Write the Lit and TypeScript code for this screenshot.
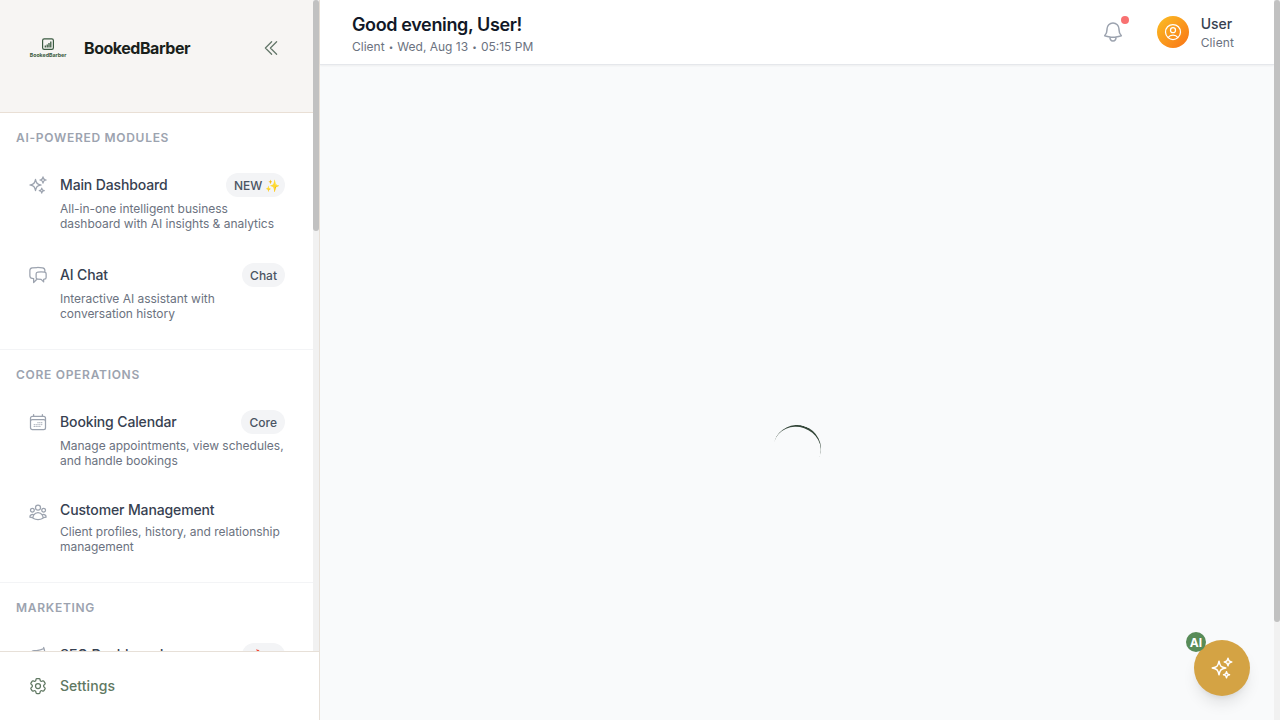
import { LitElement, html, css, svg } from "lit";
import { customElement } from "lit/decorators.js";

const ICONS: Record<string, string[]> = {
  sparkles: [
    "M9.813 15.904 9 18.75l-.813-2.846a4.5 4.5 0 0 0-3.09-3.09L2.25 12l2.846-.813a4.5 4.5 0 0 0 3.09-3.09L9 5.25l.813 2.846a4.5 4.5 0 0 0 3.09 3.09L15.75 12l-2.846.813a4.5 4.5 0 0 0-3.09 3.09ZM18.259 8.715 18 9.75l-.259-1.035a3.375 3.375 0 0 0-2.455-2.456L14.25 6l1.036-.259a3.375 3.375 0 0 0 2.455-2.456L18 2.25l.259 1.035a3.375 3.375 0 0 0 2.456 2.456L21.75 6l-1.035.259a3.375 3.375 0 0 0-2.456 2.456ZM16.894 20.567 16.5 21.75l-.394-1.183a2.25 2.25 0 0 0-1.423-1.423L13.5 18.75l1.183-.394a2.25 2.25 0 0 0 1.423-1.423l.394-1.183.394 1.183a2.25 2.25 0 0 0 1.423 1.423l1.183.394-1.183.394a2.25 2.25 0 0 0-1.423 1.423Z",
  ],
  chat: [
    "M20.25 8.511c.884.284 1.5 1.128 1.5 2.097v4.286c0 1.136-.847 2.1-1.98 2.193-.34.027-.68.052-1.02.072v3.091l-3-3c-1.354 0-2.694-.055-4.02-.163a2.115 2.115 0 0 1-.825-.242m9.345-8.334a2.126 2.126 0 0 0-.476-.095 48.64 48.64 0 0 0-8.048 0c-1.131.094-1.976 1.057-1.976 2.192v4.286c0 .837.46 1.58 1.155 1.951m9.345-8.334V6.637c0-1.621-1.152-3.026-2.76-3.235A48.455 48.455 0 0 0 11.25 3c-2.115 0-4.198.137-6.24.402-1.608.209-2.76 1.614-2.76 3.235v6.226c0 1.621 1.152 3.026 2.76 3.235.577.075 1.157.14 1.74.194V21l4.155-4.155",
  ],
  calendar: [
    "M6.75 3v2.25M17.25 3v2.25M3 18.75V7.5a2.25 2.25 0 0 1 2.25-2.25h13.5A2.25 2.25 0 0 1 21 7.5v11.25m-18 0A2.25 2.25 0 0 0 5.25 21h13.5A2.25 2.25 0 0 0 21 18.75m-18 0v-7.5A2.25 2.25 0 0 1 5.25 9h13.5A2.25 2.25 0 0 1 21 11.25v7.5m-9-6h.008v.008H12v-.008ZM12 15h.008v.008H12V15Zm0 2.25h.008v.008H12v-.008ZM9.75 15h.008v.008H9.75V15Zm0 2.25h.008v.008H9.75v-.008ZM7.5 15h.008v.008H7.5V15Zm0 2.25h.008v.008H7.5v-.008Zm6.75-4.5h.008v.008h-.008v-.008Zm0 2.25h.008v.008h-.008V15Zm0 2.25h.008v.008h-.008v-.008Zm2.25-4.5h.008v.008H16.5v-.008Zm0 2.25h.008v.008H16.5V15Z",
  ],
  users: [
    "M18 18.72a9.094 9.094 0 0 0 3.741-.479 3 3 0 0 0-4.682-2.72m.94 3.198.001.031c0 .225-.012.447-.037.666A11.944 11.944 0 0 1 12 21c-2.17 0-4.207-.576-5.963-1.584A6.062 6.062 0 0 1 6 18.719m12 0a5.971 5.971 0 0 0-.941-3.197m0 0A5.995 5.995 0 0 0 12 12.75a5.995 5.995 0 0 0-5.058 2.772m0 0a3 3 0 0 0-4.681 2.72 8.986 8.986 0 0 0 3.74.477m.94-3.197a5.971 5.971 0 0 0-.94 3.197M15 6.75a3 3 0 1 1-6 0 3 3 0 0 1 6 0Zm6 3a2.25 2.25 0 1 1-4.5 0 2.25 2.25 0 0 1 4.5 0Zm-13.5 0a2.25 2.25 0 1 1-4.5 0 2.25 2.25 0 0 1 4.5 0Z",
  ],
  megaphone: [
    "M10.34 15.84c-.688-.06-1.386-.09-2.09-.09H7.5a4.5 4.5 0 1 1 0-9h.75c.704 0 1.402-.03 2.09-.09m0 9.18c.253.962.584 1.892.985 2.783.247.55.06 1.21-.463 1.511l-.657.38c-.551.318-1.26.117-1.527-.461a20.845 20.845 0 0 1-1.44-4.282m3.102.069a18.03 18.03 0 0 1-.59-4.59c0-1.586.205-3.124.59-4.59m0 9.18a23.848 23.848 0 0 1 8.835 2.535M10.34 6.66a23.847 23.847 0 0 0 8.835-2.535m0 0A23.74 23.74 0 0 0 18.795 3m.38 1.125a23.91 23.91 0 0 1 1.014 5.395m-1.014 8.855c-.118.38-.245.754-.38 1.125m.38-1.125a23.91 23.91 0 0 0 1.014-5.395m0-3.46c.495.413.811 1.035.811 1.73 0 .695-.316 1.317-.811 1.73m0-3.46a24.347 24.347 0 0 1 0 3.46",
  ],
  chevrons: ["m18.75 4.5-7.5 7.5 7.5 7.5m-6-15L5.25 12l7.5 7.5"],
  bell: [
    "M14.857 17.082a23.848 23.848 0 0 0 5.454-1.31A8.967 8.967 0 0 1 18 9.75V9A6 6 0 0 0 6 9v.75a8.967 8.967 0 0 1-2.312 6.022c1.733.64 3.56 1.085 5.455 1.31m5.714 0a24.255 24.255 0 0 1-5.714 0m5.714 0a3 3 0 1 1-5.714 0",
  ],
  user: [
    "M17.982 18.725A7.488 7.488 0 0 0 12 15.75a7.488 7.488 0 0 0-5.982 2.975m11.963 0a9 9 0 1 0-11.963 0m11.963 0A8.966 8.966 0 0 1 12 21a8.966 8.966 0 0 1-5.982-2.275M15 9.75a3 3 0 1 1-6 0 3 3 0 0 1 6 0Z",
  ],
  cog: [
    "M9.594 3.94c.09-.542.56-.94 1.11-.94h2.593c.55 0 1.02.398 1.11.94l.213 1.281c.063.374.313.686.645.87.074.04.147.083.22.127.325.196.72.257 1.075.124l1.217-.456a1.125 1.125 0 0 1 1.37.49l1.296 2.247a1.125 1.125 0 0 1-.26 1.431l-1.003.827c-.293.241-.438.613-.43.992a7.723 7.723 0 0 1 0 .255c-.008.378.137.75.43.991l1.004.827c.424.35.534.955.26 1.43l-1.298 2.247a1.125 1.125 0 0 1-1.369.491l-1.217-.456c-.355-.133-.75-.072-1.076.124a6.47 6.47 0 0 1-.22.128c-.331.183-.581.495-.644.869l-.213 1.281c-.09.543-.56.94-1.11.94h-2.594c-.55 0-1.019-.398-1.11-.94l-.213-1.281c-.062-.374-.312-.686-.644-.87a6.52 6.52 0 0 1-.22-.127c-.325-.196-.72-.257-1.076-.124l-1.217.456a1.125 1.125 0 0 1-1.369-.49l-1.297-2.247a1.125 1.125 0 0 1 .26-1.431l1.004-.827c.292-.24.437-.613.43-.991a6.932 6.932 0 0 1 0-.255c.007-.38-.138-.751-.43-.992l-1.004-.827a1.125 1.125 0 0 1-.26-1.43l1.297-2.247a1.125 1.125 0 0 1 1.37-.491l1.216.456c.356.133.751.072 1.076-.124.072-.044.146-.086.22-.128.332-.183.582-.495.644-.869l.214-1.28Z",
    "M15 12a3 3 0 1 1-6 0 3 3 0 0 1 6 0Z",
  ],
};

const icon = (name: string, size = 20, width = 1.5) => html`<svg
  width=${size} height=${size} viewBox="0 0 24 24" fill="none"
  stroke="currentColor" stroke-width=${width} stroke-linecap="round" stroke-linejoin="round"
>${ICONS[name].map((d) => svg`<path d=${d}></path>`)}</svg>`;

interface Item { icon: string; title: string; badge?: unknown; lines: string[] }
interface Section { label: string; items: Item[] }

const SECTIONS: Section[] = [
  {
    label: "AI-Powered Modules",
    items: [
      { icon: "sparkles", title: "Main Dashboard", badge: html`NEW <span class="emoji trailing">✨</span>`, lines: ["All-in-one intelligent business", "dashboard with AI insights & analytics"] },
      { icon: "chat", title: "AI Chat", badge: "Chat", lines: ["Interactive AI assistant with", "conversation history"] },
    ],
  },
  {
    label: "Core Operations",
    items: [
      { icon: "calendar", title: "Booking Calendar", badge: "Core", lines: ["Manage appointments, view schedules,", "and handle bookings"] },
      { icon: "users", title: "Customer Management", lines: ["Client profiles, history, and relationship", "management"] },
    ],
  },
  {
    label: "Marketing",
    items: [
      { icon: "megaphone", title: "SEO Dashboard", badge: html`<span class="emoji leading">🔥</span> AI`, lines: [] },
    ],
  },
];

@customElement("app-root")
export class AppRoot extends LitElement {
  static styles = css`
    :host { display: flex; width: 100%; height: 100vh; overflow: hidden; background: #f9fafb; font-family: Inter, sans-serif; color: #1f2937; }
    * { box-sizing: border-box; }
    svg { display: block; flex: none; }
    h1, h2, p { margin: 0; }
    .sidebar { width: 320px; flex: none; display: flex; flex-direction: column; border-right: 1px solid #e7e0d8; background: #fff; }
    .scroll { display: flex; flex: 1; min-height: 0; overflow: hidden; }
    .nav { flex: 1; min-width: 0; overflow: hidden; }
    .track { width: 6px; flex: none; background: #f1f1f1; }
    .thumb { background: #c1c1c1; border-radius: 3px; }
    .thumb.side { height: 231px; }
    .thumb.page { height: 622px; }
    .brand { height: 113px; padding: 24px 32px 0 24px; display: flex; align-items: flex-start; background: #f7f5f3; border-bottom: 1px solid #e9dfd5; }
    .logo { width: 48px; height: 48px; }
    .logo text { font: 700 5.4px Inter, sans-serif; fill: #3a5a40; }
    .name { margin-left: 12px; font-size: 16px; line-height: 48px; font-weight: 700; letter-spacing: -0.46px; color: #1a1f1b; flex: 1; }
    .collapse { padding: 14px 0; color: #64776a; }
    .section { border-bottom: 1px solid #f3f4f6; padding: 17px 16px 16px; }
    .label { font-size: 12px; line-height: 16px; font-weight: 600; letter-spacing: 0.71px; text-transform: uppercase; color: #9ca3af; margin-bottom: 15px; }
    .items { display: flex; flex-direction: column; gap: 8px; }
    .item { display: flex; padding: 12px; }
    .item > svg { margin-top: 2px; color: #9ca3af; }
    .body { margin-left: 12px; flex: 1; min-width: 0; }
    .row { display: flex; justify-content: space-between; align-items: center; min-height: 20px; }
    .title { font-size: 14px; line-height: 20px; font-weight: 500; letter-spacing: -0.13px; color: #374151; white-space: nowrap; }
    .badge { height: 24px; padding: 0 8px; border-radius: 12px; background: #f3f4f6; font-size: 12px; line-height: 25px; font-weight: 500; letter-spacing: 0; color: #4b5563; white-space: nowrap; }
    .emoji { font-size: 12px; letter-spacing: 0; line-height: 1; }
    .trailing { margin: 0 -3px 0 -0.5px; }
    .leading { margin-right: -2.5px; }
    .desc { margin-top: 4px; font-size: 12px; line-height: 15px; letter-spacing: -0.02px; color: #6b7280; white-space: nowrap; }
    .footer { height: 69px; flex: none; border-top: 1px solid #e7e0d8; padding: 24px 28px; display: flex; gap: 12px; color: #607862; font-size: 14px; line-height: 20px; font-weight: 500; letter-spacing: 0.05px; }
    .main { flex: 1; min-width: 0; display: flex; flex-direction: column; }
    .top { height: 65px; flex: none; padding: 0 40px 0 32px; display: flex; align-items: center; background: #fff; border-bottom: 1px solid #e5e7eb; box-shadow: 0 1px 2px rgba(0, 0, 0, 0.05); }
    .greet { flex: 1; padding-top: 2px; }
    h1 { font-size: 18px; line-height: 28px; font-weight: 600; letter-spacing: -0.37px; color: #111827; }
    .meta { font-size: 12px; line-height: 16px; color: #6b7280; }
    .sep { display: inline-block; width: 6px; font-size: 8px; line-height: 12px; text-align: center; vertical-align: 1px; }
    .bell { position: relative; color: #9ca3af; margin-right: 32px; }
    .dot { position: absolute; right: -4px; top: -4px; width: 8px; height: 8px; border-radius: 50%; background: #f87171; }
    .avatar { width: 32px; height: 32px; border-radius: 50%; display: grid; place-items: center; color: #fff; background: linear-gradient(135deg, #fbbf24, #f97316); margin-right: 12px; }
    .who { font-size: 14px; line-height: 20px; font-weight: 500; letter-spacing: -0.05px; color: #374151; }
    .role { margin-top: 1px; font-size: 12px; line-height: 16px; letter-spacing: 0.12px; color: #6b7280; }
    .stage { flex: 1; display: grid; place-items: center; padding-top: 113px; }
    .spinner { width: 48px; height: 48px; border-radius: 50%; border-bottom: 2px solid #35473a; transform: rotate(199deg); }
    .fab { position: absolute; left: 1194px; top: 640px; width: 56px; height: 56px; border-radius: 50%; display: grid; place-items: center; background: #d4a344; color: #fff; box-shadow: 0 10px 15px -3px rgba(0, 0, 0, 0.1), 0 4px 6px -4px rgba(0, 0, 0, 0.1); }
    .ai { position: absolute; left: -8px; top: -8px; width: 20px; height: 20px; border-radius: 50%; background: #588b58; font-size: 12px; line-height: 21px; font-weight: 700; text-align: center; }
  `;

  private renderItem(item: Item) {
    return html`<div class="item">
      ${icon(item.icon)}
      <div class="body">
        <div class="row">
          <span class="title">${item.title}</span>
          ${item.badge ? html`<span class="badge">${item.badge}</span>` : ""}
        </div>
        <div class="desc">${item.lines.map((l) => html`<div>${l}</div>`)}</div>
      </div>
    </div>`;
  }

  render() {
    return html`
      <aside class="sidebar">
        <div class="scroll">
          <div class="nav">
            <div class="brand">
              <svg class="logo" viewBox="0 0 48 48">
                <rect x="18.6" y="14.8" width="10.8" height="10.6" rx="1.6" fill="none" stroke="#3a5a40" stroke-width="1.2"></rect>
                <path d="M21.3 23.5v-2M23.2 23.5v-3M25 23.5v-4.5M26.8 23.5v-6" stroke="#3a5a40" stroke-width="1.3"></path>
                <text x="5.7" y="32.5" textLength="36.6" lengthAdjust="spacingAndGlyphs">BookedBarber</text>
              </svg>
              <span class="name">BookedBarber</span>
              <span class="collapse">${icon("chevrons")}</span>
            </div>
            ${SECTIONS.map((s) => html`<section class="section">
              <div class="label">${s.label}</div>
              <div class="items">${s.items.map((i) => this.renderItem(i))}</div>
            </section>`)}
          </div>
          <div class="track"><div class="thumb side"></div></div>
        </div>
        <div class="footer">${icon("cog")}<span>Settings</span></div>
      </aside>
      <main class="main">
        <header class="top">
          <div class="greet">
            <h1>Good evening, User!</h1>
            <p class="meta">Client <span class="sep">•</span> Wed, Aug 13 <span class="sep">•</span> 05:15 PM</p>
          </div>
          <div class="bell">${icon("bell", 24)}<span class="dot"></span></div>
          <div class="avatar">${icon("user")}</div>
          <div><div class="who">User</div><div class="role">Client</div></div>
        </header>
        <div class="stage"><div class="spinner"></div></div>
      </main>
      <div class="track"><div class="thumb page"></div></div>
      <div class="fab">${icon("sparkles", 24)}<span class="ai">AI</span></div>
    `;
  }
}
